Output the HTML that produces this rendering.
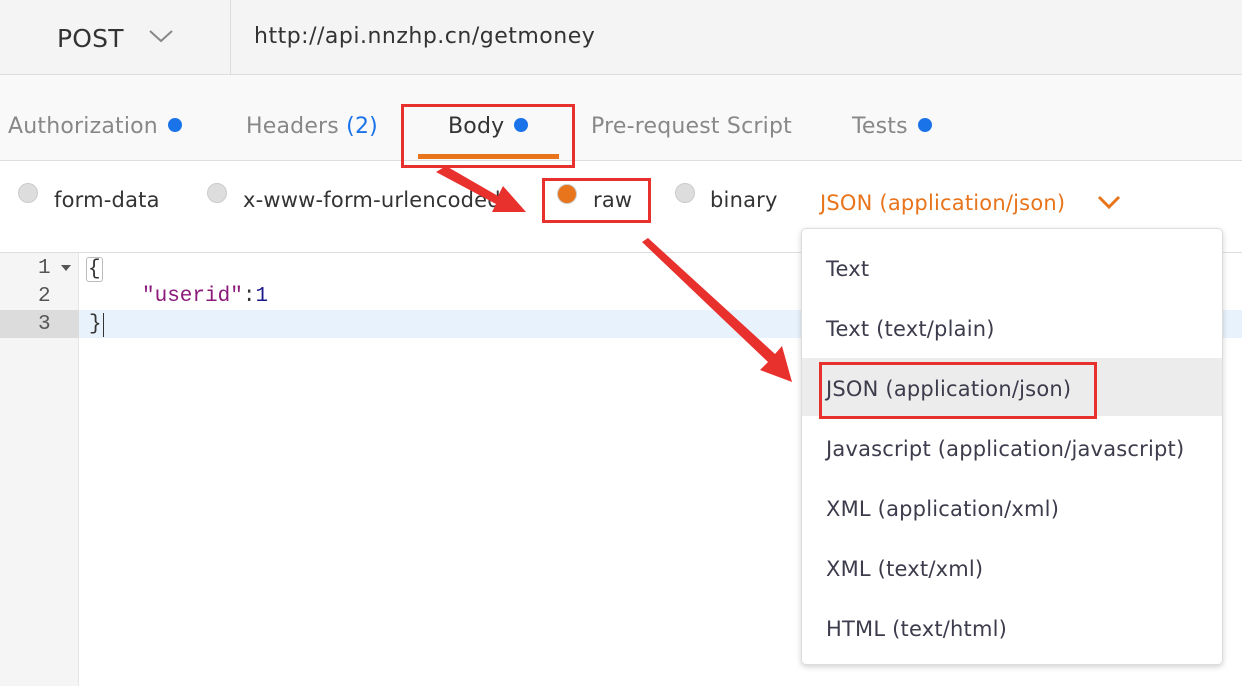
<!DOCTYPE html>
<html><head><meta charset="utf-8"><style>
*{margin:0;padding:0;box-sizing:border-box}
body{width:1242px;height:686px;overflow:hidden;background:#fff;font-family:"DejaVu Sans","Liberation Sans",sans-serif;position:relative;color:#444;letter-spacing:0.2px}
.abs{position:absolute;white-space:nowrap}
.top{left:0;top:0;width:1242px;height:75px;background:#f4f4f4;border-bottom:1px solid #ddd}
.tabs{left:0;top:75px;width:1242px;height:86px;background:#f9f9f9;border-bottom:1px solid #ddd}
.dot{display:inline-block;width:14px;height:14px;border-radius:50%;background:#1a73e8;margin-left:10px;vertical-align:1px}
.radio{width:20px;height:20px;border-radius:50%;background:#ddd;border:1px solid #ccc}
.red{border:3px solid #e8302c}
.gut{left:0;top:253px;width:79px;height:433px;background:#f5f5f5;border-right:1px solid #e5e5e5}
.ln{font-family:"Liberation Mono",monospace;font-size:21px;color:#555;letter-spacing:0}
.dd{left:801px;top:228px;width:422px;height:437px;background:#fff;border:1px solid #ddd;border-radius:5px;box-shadow:0 2px 6px rgba(0,0,0,.18)}
.it{position:absolute;left:24px;font-size:21px;color:#3c3c4c}
</style></head><body>
<div class="abs top"></div>
<div class="abs" style="left:230px;top:0;width:1px;height:75px;background:#ddd"></div>
<div class="abs" style="left:57px;top:24px;font-size:25px;color:#333">POST</div>
<svg class="abs" style="left:148px;top:28px" width="26" height="16"><path d="M2 3 L13 13 L24 3" fill="none" stroke="#888" stroke-width="2"/></svg>
<div class="abs" style="left:254px;top:24px;font-size:22px;color:#333;letter-spacing:0.5px">http://api.nnzhp.cn/getmoney</div>
<div class="abs tabs"></div>
<div class="abs" style="left:8px;top:114px;font-size:22px;color:#888">Authorization<span class="dot"></span></div>
<div class="abs" style="left:246px;top:114px;font-size:22px;color:#888">Headers <span style="color:#1a73e8">(2)</span></div>
<div class="abs" style="left:448px;top:114px;font-size:22px;color:#333">Body<span class="dot"></span></div>
<div class="abs" style="left:418px;top:154px;width:141px;height:5px;background:#e8741c"></div>
<div class="abs" style="left:591px;top:114px;font-size:22px;color:#888">Pre-request Script</div>
<div class="abs" style="left:852px;top:114px;font-size:22px;color:#888">Tests<span class="dot"></span></div>
<div class="abs red" style="left:401px;top:104px;width:174px;height:64px"></div>

<div class="abs radio" style="left:18px;top:183px"></div>
<div class="abs" style="left:54px;top:188px;font-size:21px;color:#333">form-data</div>
<div class="abs radio" style="left:207px;top:183px"></div>
<div class="abs" style="left:243px;top:188px;font-size:21px;color:#333">x-www-form-urlencoded</div>
<div class="abs radio" style="left:557px;top:184px;background:#e8741c;border-color:#ccc"></div>
<div class="abs" style="left:593px;top:188px;font-size:21px;color:#333">raw</div>
<div class="abs red" style="left:542px;top:178px;width:109px;height:45px"></div>
<div class="abs radio" style="left:675px;top:183px"></div>
<div class="abs" style="left:710px;top:188px;font-size:21px;color:#333">binary</div>
<div class="abs" style="left:820px;top:191px;font-size:21px;color:#e8741c">JSON (application/json)</div>
<svg class="abs" style="left:1096px;top:194px" width="26" height="16"><path d="M3 3 L13 13 L23 3" fill="none" stroke="#e8741c" stroke-width="3"/></svg>
<div class="abs" style="left:0;top:252px;width:1242px;height:1px;background:#ddd"></div>

<div class="abs gut"></div>
<div class="abs" style="left:0;top:310px;width:79px;height:28px;background:#dcdcdc"></div>
<div class="abs" style="left:79px;top:310px;width:1163px;height:28px;background:#e8f2fc"></div>
<div class="abs ln" style="left:38px;top:257px">1</div>
<div class="abs" style="left:61px;top:265px;width:0;height:0;border-left:5px solid transparent;border-right:5px solid transparent;border-top:6px solid #555"></div>
<div class="abs ln" style="left:38px;top:285px">2</div>
<div class="abs ln" style="left:38px;top:313px">3</div>
<div class="abs ln" style="left:86px;top:257px;color:#333;border:1px solid #bbb;border-radius:3px;padding:0 1px">{</div>
<div class="abs ln" style="left:142px;top:285px"><span style="color:#8b1a7a">"userid"</span><span style="color:#333">:</span><span style="color:#1a1a8a">1</span></div>
<div class="abs ln" style="left:89px;top:313px;color:#333">}</div>
<div class="abs" style="left:103px;top:313px;width:1px;height:24px;background:#333"></div>

<div class="abs dd">
<div style="position:absolute;left:0;top:129px;width:420px;height:58px;background:#ececec"></div>
<div class="it" style="top:28px">Text</div>
<div class="it" style="top:88px">Text (text/plain)</div>
<div class="it" style="top:148px">JSON (application/json)</div>
<div class="it" style="top:208px">Javascript (application/javascript)</div>
<div class="it" style="top:268px">XML (application/xml)</div>
<div class="it" style="top:328px">XML (text/xml)</div>
<div class="it" style="top:388px">HTML (text/html)</div>
</div>
<div class="abs red" style="left:819px;top:362px;width:278px;height:57px"></div>

<svg class="abs" style="left:0;top:0" width="1242" height="686">
<polygon points="436,172 446,166 498,196 503,186 526,212 492,212 496,204" fill="#e8302c"/>
<polygon points="642,242 648,238 775,354 782,346 792,382 760,370 768,362" fill="#e8302c"/>
</svg>
</body></html>
